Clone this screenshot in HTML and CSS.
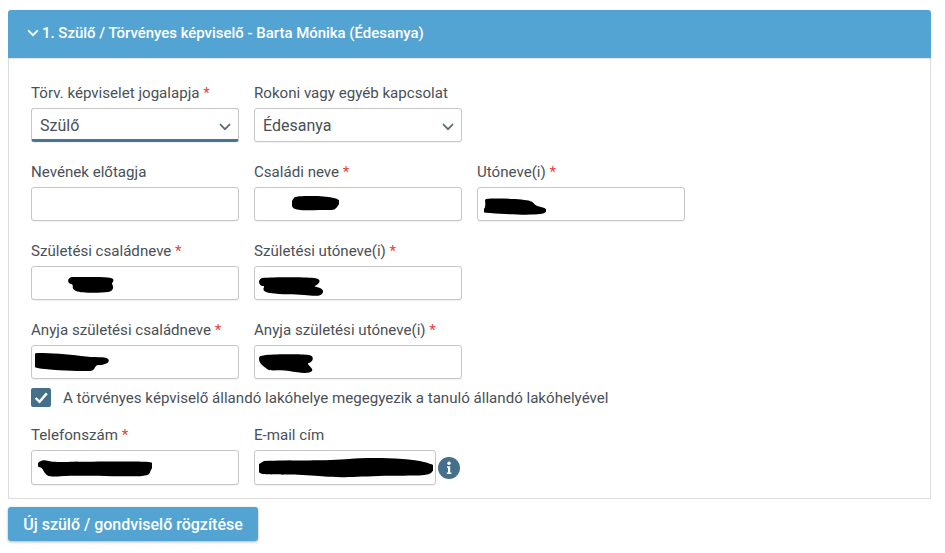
FILE: index.html
```
<!DOCTYPE html>
<html lang="hu">
<head>
<meta charset="utf-8">
<title>Szülő</title>
<link rel="stylesheet" href="styles.css">
</head>
<body>
<section class="panel">
  <h2 class="panel-head">
    <svg class="head-chev" viewBox="0 0 12 8"><path d="M1.2 1.4 6 6.2l4.8-4.8" fill="none" stroke="#fff" stroke-width="2"/></svg>
    <span>1. Szülő / Törvényes képviselő - Barta Mónika (Édesanya)</span>
  </h2>
  <div class="panel-body">
    <div class="row">
      <div class="field">
        <label class="lbl">Törv. képviselet jogalapja <i>*</i></label>
        <div class="control select focused">Szülő
          <svg class="chev" viewBox="0 0 12 8"><path d="M1 1.2 6 6.2l5-5" fill="none" stroke="#5b6b75" stroke-width="1.7"/></svg>
        </div>
      </div>
      <div class="field">
        <label class="lbl">Rokoni vagy egyéb kapcsolat</label>
        <div class="control select">Édesanya
          <svg class="chev" viewBox="0 0 12 8"><path d="M1 1.2 6 6.2l5-5" fill="none" stroke="#5b6b75" stroke-width="1.7"/></svg>
        </div>
      </div>
    </div>
    <div class="row">
      <div class="field">
        <label class="lbl">Nevének előtagja</label>
        <div class="control"></div>
      </div>
      <div class="field">
        <label class="lbl">Családi neve <i>*</i></label>
        <div class="control">
          <svg class="blot b-csal" viewBox="0 0 47 16"><path d="M3 1C12-1 34 0 42 2S48 7 45 11 40 14 30 14 8 15 3 13-1 4 3 1Z"/></svg>
        </div>
      </div>
      <div class="field">
        <label class="lbl">Utóneve(i) <i>*</i></label>
        <div class="control">
          <svg class="blot b-uto" viewBox="0 0 62 17"><path d="M2 1C14 0 40 1 46 3S48 7 57 9 63 15 56 16 30 17 6 15 0 15 1 9 0 3 2 1Z"/></svg>
        </div>
      </div>
    </div>
    <div class="row">
      <div class="field">
        <label class="lbl">Születési családneve <i>*</i></label>
        <div class="control">
          <svg class="blot b-szcs" viewBox="0 0 46 16"><path d="M4 0C14 0 30-.5 40 .5S43 6 44 7 47 14 40 15 14 16.500 8 14 7 8 3 7-1 1 4 0Z"/></svg>
        </div>
      </div>
      <div class="field">
        <label class="lbl">Születési utóneve(i) <i>*</i></label>
        <div class="control">
          <svg class="blot b-szut" viewBox="0 0 65 19"><path d="M4 1C16 0 46 0 56 1S60 8 57 9 66 10 65 15 56 19 46 18 24 18 12 16 9 9 5 9-1 3 4 1Z"/></svg>
        </div>
      </div>
    </div>
    <div class="row">
      <div class="field">
        <label class="lbl">Anyja születési családneve <i>*</i></label>
        <div class="control">
          <svg class="blot b-ancs" viewBox="0 0 74 19"><path d="M3 0C16 0 32 1 46 3S70 3 73 6 70 12 64 12 62 18 54 18 30 18 10 16 0 10 0 4 1 1 3 0Z"/></svg>
        </div>
      </div>
      <div class="field">
        <label class="lbl">Anyja születési utóneve(i) <i>*</i></label>
        <div class="control">
          <svg class="blot b-anut" viewBox="0 0 54 19"><path d="M7 1C18 0 44 0 50 1S54 8 50 9 55 14 53 17 40 19 30 17 12 18 8 15 0 9 0 5 3 2 7 1Z"/></svg>
        </div>
      </div>
    </div>
    <label class="check">
      <span class="box"><svg viewBox="0 0 20 19"><path d="M4.600 10 8.500 13.800 15.800 5.400" fill="none" stroke="#fff" stroke-width="2.400"/></svg></span>
      <span>A törvényes képviselő állandó lakóhelye megegyezik a tanuló állandó lakóhelyével</span>
    </label>
    <div class="row last">
      <div class="field">
        <label class="lbl">Telefonszám <i>*</i></label>
        <div class="control">
          <svg class="blot b-tel" viewBox="0 0 114 17"><path d="M3 1C6-1 10 2 20 2S100 1 110 2 115 6 113 10 112 15 104 16 40 15 26 16 10 17 7 13 5 8 1 7 0 2 3 1Z"/></svg>
        </div>
      </div>
      <div class="field-mail">
        <label class="lbl">E-mail cím</label>
        <div class="mail-line">
          <div class="control mail">
            <svg class="blot b-mail" viewBox="0 0 174 20"><path d="M5 3C30 2 70 3 90 1S150 0 165 4 176 9 173 14 150 17 120 18 80 20 60 18 10 17 4 16-1 12 0 6 5 3Z"/></svg>
          </div>
          <svg class="info" viewBox="0 0 22 22"><circle cx="11" cy="11" r="11" fill="#44708b"/><circle cx="11" cy="6.300" r="1.700" fill="#fff"/><path d="M9 9.300h3.200v6.200h1.200v1.500H8.800v-1.500H10v-4.700H9Z" fill="#fff"/></svg>
        </div>
      </div>
    </div>
  </div>
</section>
<button class="add-btn" type="button">Új szülő / gondviselő rögzítése</button>
</body>
</html>
```
FILE: styles.css
```
* { box-sizing: border-box; }
html, body { height: 100%; }
body {
  margin: 0;
  padding: 10px 14px 0 8px;
  background: #fff;
  color: #495057;
  font-family: Roboto, "Liberation Sans", sans-serif;
  font-size: 15.1px;
  overflow: hidden;
}
.panel { width: 923px; }
.panel-head {
  display: flex;
  align-items: center;
  gap: 3px;
  height: 48px;
  margin: 0;
  padding: 0 0 2px 19px;
  background: #54a4d3;
  border-radius: 3px 3px 0 0;
  color: #fff;
  font-size: 14.95px;
  font-weight: 500;
  box-shadow: 0 1px 1px rgba(0,0,0,.12);
}
.head-chev { width: 12px; height: 8px; flex: none; }
.panel-body {
  height: 441px;
  padding: 25px 22px 0;
  border: 1px solid #ddd;
  border-top: 0;
}
.row { display: flex; gap: 15px; margin-bottom: 20px; }
.row.last { margin-bottom: 0; }
.field { width: 208px; }
.field-mail { width: 208px; }
.lbl { display: block; height: 20px; line-height: 20px; margin-bottom: 5px; color: #495057; }
.lbl i { color: #e8413c; font-style: normal; }
.control {
  position: relative;
  height: 34px;
  border: 1px solid #c6c6c6;
  border-radius: 3px;
  background: #fff;
  box-shadow: 0 1px 1px rgba(0,0,0,.06);
}
.row.last .control { height: 35px; }
.select {
  padding-left: 8px;
  line-height: 33px;
  font-size: 16px;
  color: #495057;
}
.focused { border-bottom: 3px solid #4a7590; }
.chev { position: absolute; right: 7px; top: 14px; width: 12px; height: 8px; }
.blot { position: absolute; fill: #000; display: block; }
.b-csal { left: 37px; top: 8px; width: 47px; height: 16px; }
.b-uto { left: 6px; top: 10px; width: 62px; height: 17px; }
.b-szcs { left: 36px; top: 10px; width: 46px; height: 16px; }
.b-szut { left: 3px; top: 10px; width: 65px; height: 19px; }
.b-ancs { left: 3px; top: 7px; width: 74px; height: 19px; }
.b-anut { left: 4px; top: 8px; width: 54px; height: 19px; }
.b-tel { left: 6px; top: 9px; width: 114px; height: 17px; }
.b-mail { left: 4px; top: 7px; width: 174px; height: 20px; }
.check {
  display: flex;
  align-items: center;
  gap: 12px;
  height: 19px;
  margin: -11px 0 18px;
  color: #495057;
}
.box { width: 20px; height: 19px; border-radius: 2px; background: #44708b; flex: none; }
.box svg { display: block; width: 20px; height: 19px; }
.mail-line { display: flex; align-items: center; gap: 2px; width: 208px; }
.mail { width: 182px; flex: none; }
.info { width: 22px; height: 22px; flex: none; }
.add-btn {
  display: block;
  width: 250px;
  height: 34px;
  margin-top: 8px;
  padding: 0;
  border: 0;
  border-radius: 3px;
  background: #54a4d3;
  color: #fff;
  font-family: inherit;
  font-size: 16px;
  font-weight: 500;
  box-shadow: 0 1px 3px rgba(0,0,0,.3);
}
```
